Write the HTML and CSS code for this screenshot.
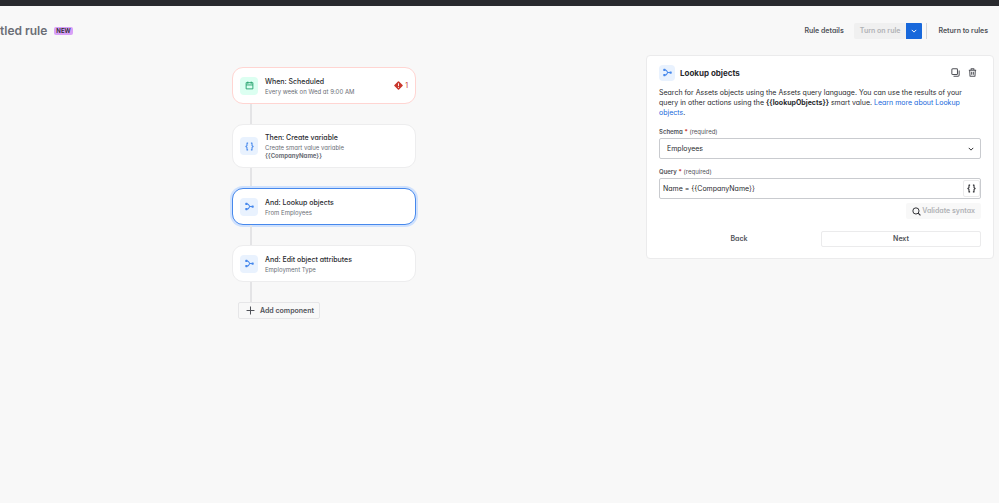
FILE: index.html
```html
<!DOCTYPE html>
<html lang="en">
<head>
    <meta charset="UTF-8">
    <meta name="viewport" content="width=device-width, initial-scale=1.0">
    <title>Automation rule</title>
    <link rel="stylesheet" href="styles.css">
</head>
<body>
    <svg class="sprite" aria-hidden="true">
        <symbol id="icon-branch" viewBox="0 0 16 16">
            <path d="M3.5 3.5h1c3 0 2 4.5 5 4.5H13M3.5 12.5h1c3 0 2-4.5 5-4.5" fill="none" stroke="currentColor" stroke-width="1.8"/>
            <rect x="0.5" y="1.5" width="4" height="4" rx="1" fill="currentColor"/>
            <rect x="0.5" y="10.5" width="4" height="4" rx="1" fill="currentColor"/>
            <rect x="11.5" y="6" width="4" height="4" rx="1" fill="currentColor"/>
        </symbol>
        <symbol id="icon-braces" viewBox="0 0 16 16">
            <path d="M5.5 2H3.5v4.5L1.5 8l2 1.5V14h2M10.5 2h2v4.5l2 1.5-2 1.5V14h-2" fill="none" stroke="currentColor" stroke-width="1.8" stroke-linejoin="round"/>
        </symbol>
        <symbol id="icon-chevron" viewBox="0 0 16 16">
            <path d="M2 5l6 6 6-6" fill="none" stroke="currentColor" stroke-width="2.6"/>
        </symbol>
    </svg>

    <div class="topbar"></div>
    <header class="header">
        <h1>tled rule</h1>
        <span class="badge">NEW</span>
        <nav class="actions">
            <button class="btn">Rule details</button>
            <div class="split">
                <button class="btn btn-disabled" disabled>Turn on rule</button>
                <button class="btn-toggle" aria-label="More options">
                    <svg class="chevron"><use href="#icon-chevron"/></svg>
                </button>
            </div>
            <span class="divider"></span>
            <button class="btn">Return to rules</button>
        </nav>
    </header>

    <main class="layout">
        <section class="canvas">
            <div class="flow">
                <article class="card card-error">
                    <span class="tile tile-green">
                        <svg viewBox="0 0 16 16">
                            <path d="M2 3h12v11H2zM2 7h12M5 1v4M11 1v4" fill="none" stroke="currentColor" stroke-width="1.6" stroke-linejoin="round"/>
                        </svg>
                    </span>
                    <div class="card-text">
                        <h2>When: Scheduled</h2>
                        <p>Every week on Wed at 9:00 AM</p>
                    </div>
                    <span class="error">
                        <svg viewBox="0 0 16 16">
                            <path d="M7 .8a1.4 1.4 0 0 1 2 0L15.2 7a1.4 1.4 0 0 1 0 2L9 15.2a1.4 1.4 0 0 1-2 0L.8 9a1.4 1.4 0 0 1 0-2z" fill="currentColor"/>
                            <path d="M8 4v5M8 10.5v1.7" stroke="#fff" stroke-width="1.6"/>
                        </svg>
                        1
                    </span>
                </article>
                <span class="connector"></span>
                <article class="card">
                    <span class="tile"><svg><use href="#icon-braces"/></svg></span>
                    <div class="card-text">
                        <h2>Then: Create variable</h2>
                        <p>Create smart value variable <b>{{CompanyName}}</b></p>
                    </div>
                </article>
                <span class="connector"></span>
                <article class="card card-selected">
                    <span class="tile"><svg><use href="#icon-branch"/></svg></span>
                    <div class="card-text">
                        <h2>And: Lookup objects</h2>
                        <p>From Employees</p>
                    </div>
                </article>
                <span class="connector"></span>
                <article class="card">
                    <span class="tile"><svg><use href="#icon-branch"/></svg></span>
                    <div class="card-text">
                        <h2>And: Edit object attributes</h2>
                        <p>Employment Type</p>
                    </div>
                </article>
                <span class="connector"></span>
                <button class="btn-add">
                    <svg viewBox="0 0 16 16"><path d="M8 1v14M1 8h14" stroke="currentColor" stroke-width="1.8"/></svg>
                    Add component
                </button>
            </div>
        </section>

        <aside class="panel">
            <div class="panel-head">
                <span class="tile tile-small"><svg><use href="#icon-branch"/></svg></span>
                <h2>Lookup objects</h2>
                <button class="btn-icon" aria-label="Duplicate">
                    <svg viewBox="0 0 16 16">
                        <rect x="1.5" y="1.5" width="10" height="10" rx="1.5" fill="none" stroke="currentColor" stroke-width="1.8"/>
                        <path d="M14.5 4.5v8a2 2 0 0 1-2 2h-8" fill="none" stroke="currentColor" stroke-width="1.8"/>
                    </svg>
                </button>
                <button class="btn-icon" aria-label="Delete">
                    <svg viewBox="0 0 16 16">
                        <path d="M1.5 4h13M5.5 4V1.5h5V4M3 4l.6 10.5h8.8L13 4M6.5 6.5v5.5M9.5 6.5v5.5" fill="none" stroke="currentColor" stroke-width="1.8" stroke-linejoin="round"/>
                    </svg>
                </button>
            </div>
            <p class="description">Search for Assets objects using the Assets query language. You can use the results of your query in other actions using the <b>{{lookupObjects}}</b> smart value. <a href="#">Learn more about Lookup objects</a>.</p>

            <form>
                <label for="schema"><b>Schema</b> <span class="star">*</span> (required)</label>
                <div class="field">
                    <select id="schema">
                        <option>Employees</option>
                    </select>
                    <svg class="chevron"><use href="#icon-chevron"/></svg>
                </div>

                <label for="query"><b>Query</b> <span class="star">*</span> (required)</label>
                <div class="field">
                    <input type="text" id="query" value="Name = {{CompanyName}}">
                    <button type="button" class="btn-braces" aria-label="Insert smart value">
                        <svg><use href="#icon-braces"/></svg>
                    </button>
                </div>

                <button type="button" class="btn-validate" disabled>
                    <svg viewBox="0 0 16 16"><circle cx="7" cy="7" r="5.5" fill="none" stroke="currentColor" stroke-width="1.7"/><path d="M11 11l4 4" stroke="currentColor" stroke-width="2"/></svg>
                    Validate syntax
                </button>

                <div class="panel-foot">
                    <button type="button" class="btn">Back</button>
                    <button type="button" class="btn btn-outline">Next</button>
                </div>
            </form>
        </aside>
    </main>
</body>
</html>
```
FILE: styles.css
```css
* {
    box-sizing: border-box;
}
body {
    margin: 0;
    background: #f8f8f8;
    color: #292a2e;
    font-family: Inter, Arial, sans-serif;
    font-feature-settings: "cv11";
    font-size: 7px;
    line-height: 10px;
}
h1, h2, p {
    margin: 0;
}
button, input, select {
    font: inherit;
    font-feature-settings: inherit;
    color: inherit;
    margin: 0;
    padding: 0;
    border: 0;
    background: none;
}
svg {
    display: block;
    width: 9px;
    height: 9px;
}
.sprite {
    display: none;
}
.topbar {
    height: 6px;
    background: #292a2e;
}

/* Header */
.header {
    display: flex;
    align-items: center;
    height: 49px;
    padding-right: 5px;
}
.header h1 {
    font-size: 12px;
    line-height: 16px;
    font-weight: 600;
    color: #6b6e76;
}
.badge {
    margin-left: 7px;
    padding: 0 2px;
    border-radius: 2px;
    background: #d8a0f7;
    font-size: 6px;
    line-height: 8px;
    font-weight: 600;
}
.actions {
    display: flex;
    align-items: center;
    margin-left: auto;
}
.btn {
    height: 16px;
    padding: 0 6px;
    border-radius: 2px;
    font-weight: 600;
    color: #505258;
}
.split {
    display: flex;
    margin: 0 4px;
}
.btn-disabled {
    background: #f0f0f0;
    color: #b0b2b6;
}
.btn-toggle {
    display: flex;
    align-items: center;
    justify-content: center;
    width: 16px;
    height: 16px;
    border-radius: 0 1px 1px 0;
    background: #1868db;
    color: #fff;
}
.chevron {
    width: 6px;
    height: 6px;
}
.divider {
    width: 1px;
    height: 16px;
    margin-right: 5px;
    background: #d5d6d9;
}

/* Rule flow */
.layout {
    display: flex;
    align-items: flex-start;
    padding-right: 5px;
}
.canvas {
    flex: 1;
    display: flex;
    justify-content: center;
    padding: 12px 0 0 2px;
}
.flow {
    display: flex;
    flex-direction: column;
    width: 184px;
}
.card {
    display: flex;
    align-items: center;
    min-height: 37px;
    padding: 7px;
    border: 1px solid #ededee;
    border-radius: 11px;
    background: #fff;
}
.card-error {
    border-color: #ffd5d2;
}
.card-selected {
    border-color: #4688ec;
    box-shadow: 0 0 0 2px #cfe1fd;
}
.tile {
    display: flex;
    align-items: center;
    justify-content: center;
    width: 18px;
    height: 18px;
    border-radius: 4px;
    background: #e9f2fe;
    color: #4688ec;
}
.tile-green {
    background: #dcfff1;
    color: #22a06b;
}
.tile-small {
    width: 16px;
    height: 16px;
}
.card-text {
    flex: 1;
    margin-left: 7px;
}
.card-text h2 {
    font-size: 7px;
    line-height: 12px;
    font-weight: 500;
}
.card-text p {
    max-width: 96px;
    font-size: 6px;
    line-height: 8px;
    color: #6b6e76;
}
.error {
    display: flex;
    align-items: center;
    gap: 2px;
    color: #c9372c;
}
.connector {
    width: 2px;
    height: 20px;
    margin-left: 18px;
    background: #e4e4e6;
}
.btn-add {
    display: flex;
    align-items: center;
    align-self: flex-start;
    gap: 5px;
    height: 17px;
    margin-left: 6px;
    padding: 0 5px 0 7px;
    border: 1px solid #e6e6e8;
    border-radius: 2px;
    font-weight: 600;
    color: #505258;
}

/* Side panel */
.panel {
    width: 348px;
    padding: 8px 12px 11px;
    border: 1px solid #ebebec;
    border-radius: 4px;
    background: #fff;
}
.panel-head {
    display: flex;
    align-items: center;
}
.panel-head h2 {
    margin: 0 auto 0 5px;
    font-size: 8px;
    font-weight: 700;
}
.btn-icon {
    padding: 4px;
    color: #505258;
}
.description {
    margin: 7px 0 10px;
}
.description a {
    color: #1868db;
    text-decoration: none;
}
.panel label {
    display: block;
    font-size: 6px;
    line-height: 8px;
    color: #505258;
}
.panel label b {
    font-weight: 600;
}
.star {
    color: #c9372c;
    font-weight: 700;
}
.field {
    display: flex;
    align-items: center;
    height: 21px;
    margin: 2px 0 9px;
    border: 1px solid #c9cbcf;
    border-radius: 2px;
}
.field select,
.field input {
    flex: 1;
    height: 100%;
    min-width: 0;
    appearance: none;
}
.field select {
    padding-left: 7px;
}
.field input {
    padding-left: 3px;
}
.field .chevron {
    margin-right: 6px;
}
.btn-braces {
    display: flex;
    align-items: center;
    justify-content: center;
    width: 17px;
    height: 17px;
    border: 1px solid #ebebec;
    border-radius: 2px;
}
.btn-validate {
    display: flex;
    align-items: center;
    gap: 1px;
    height: 16px;
    margin: -5px 0 12px auto;
    padding: 0 6px;
    border-radius: 2px;
    background: #f8f8f8;
    font-weight: 600;
    color: #b0b2b6;
}
.btn-validate svg {
    color: #292a2e;
}
.panel-foot {
    display: grid;
    grid-template-columns: 1fr 1fr;
    gap: 2px;
}
.btn-outline {
    border: 1px solid #ebebec;
}
```
